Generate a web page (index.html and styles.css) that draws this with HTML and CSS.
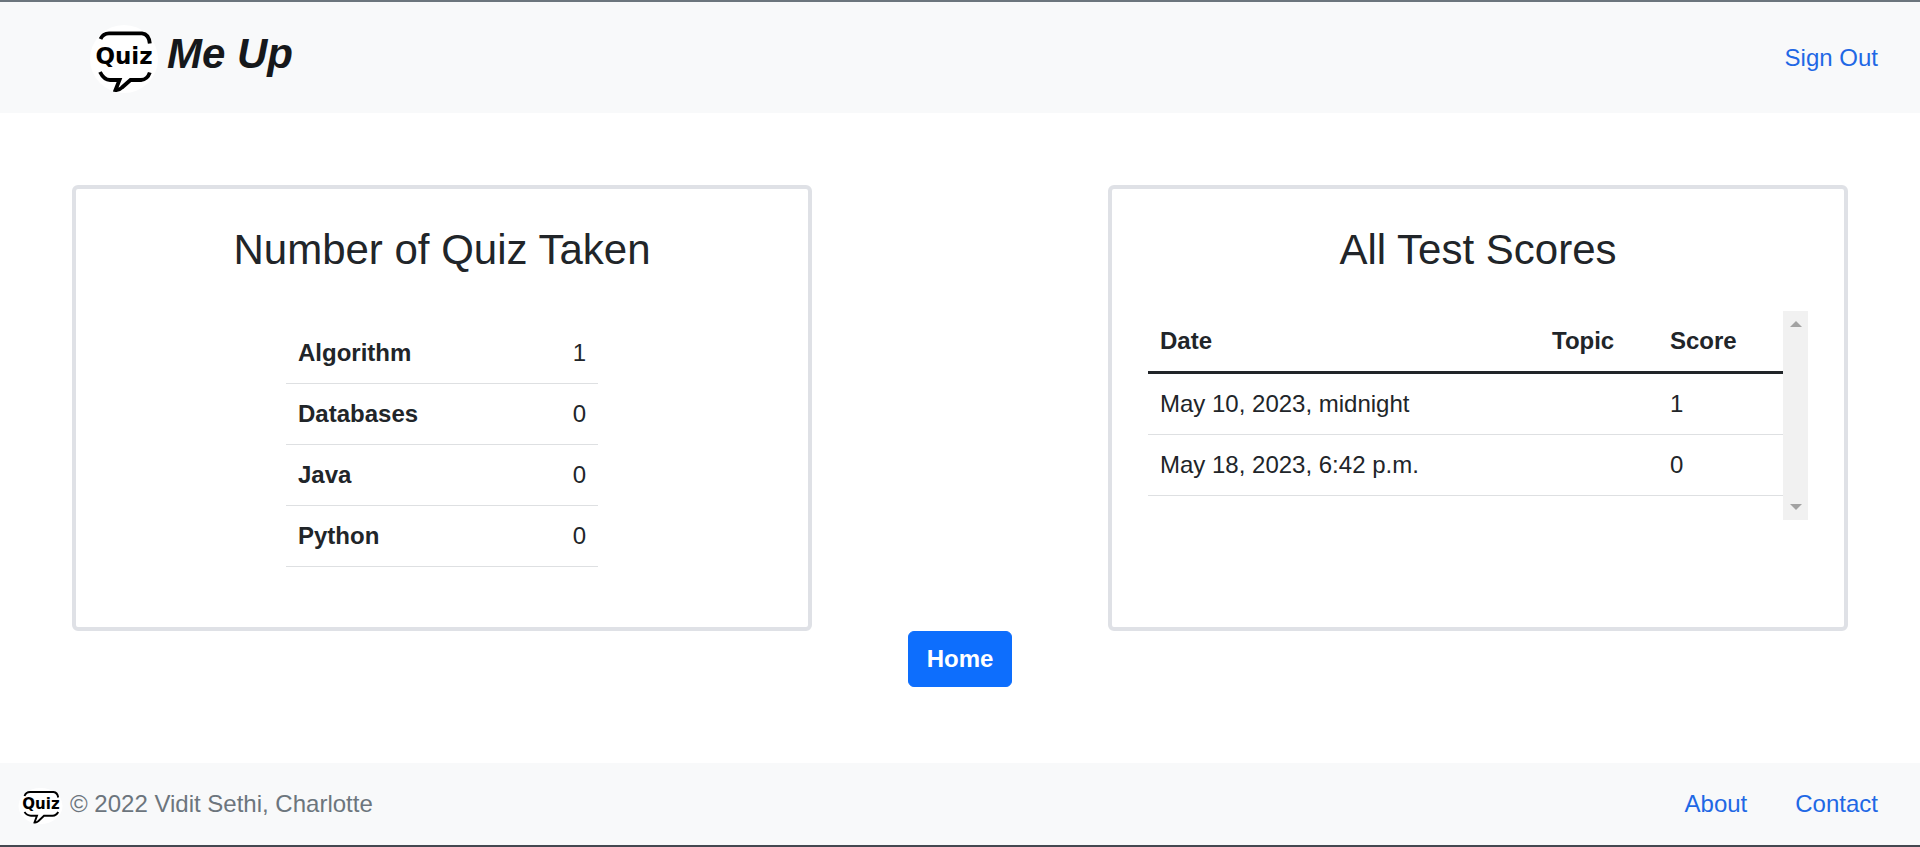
FILE: index.html
```html
<!DOCTYPE html>
<html lang="en">
<head>
<meta charset="utf-8">
<title>Quiz Me Up</title>
<link rel="stylesheet" href="styles.css">
</head>
<body>
<header class="navbar">
  <a class="brand" href="#">
    <svg class="brand-logo" viewBox="0 0 68 68">
      <circle cx="34" cy="34" r="34" fill="#fff"/>
      <g fill="none" stroke="#000" stroke-width="3.8">
        <path d="M10.500 14Q13 8.300 19 8.300H52Q59 9 59.800 18.500"/>
        <path d="M10 47Q14 55 20 55H29.500L25.500 65Q29 65.500 32 62.500L40.500 55H51Q57.500 54.500 59.800 47.500"/>
      </g>
      <text x="34" y="39" text-anchor="middle" class="logo-text">Quiz</text>
    </svg>
    <span>Me Up</span>
  </a>
  <a class="link" href="#">Sign Out</a>
</header>
<main class="content">
  <div class="cards">
    <section class="card">
      <h3 class="card-title">Number of Quiz Taken</h3>
      <table class="table counts">
        <tbody>
          <tr><th scope="row">Algorithm</th><td>1</td></tr>
          <tr><th scope="row">Databases</th><td>0</td></tr>
          <tr><th scope="row">Java</th><td>0</td></tr>
          <tr><th scope="row">Python</th><td>0</td></tr>
        </tbody>
      </table>
    </section>
    <section class="card">
      <h3 class="card-title">All Test Scores</h3>
      <div class="scores-box">
        <table class="table scores">
          <thead>
            <tr><th scope="col">Date</th><th scope="col" class="col-topic">Topic</th><th scope="col" class="col-score">Score</th></tr>
          </thead>
          <tbody>
            <tr><td>May 10, 2023, midnight</td><td></td><td>1</td></tr>
            <tr><td>May 18, 2023, 6:42 p.m.</td><td></td><td>0</td></tr>
          </tbody>
        </table>
        <div class="scrollbar" aria-hidden="true">
          <svg class="arrow" viewBox="0 0 12 6"><path d="M0 6L6 0L12 6Z"/></svg>
          <svg class="arrow" viewBox="0 0 12 6"><path d="M0 0L6 6L12 0Z"/></svg>
        </div>
      </div>
    </section>
  </div>
  <button class="button" type="button">Home</button>
</main>
<footer class="footer">
  <div class="copyright">
    <svg class="footer-logo" viewBox="0 0 46 46">
      <ellipse cx="22.500" cy="25" rx="22" ry="18" fill="#fff"/>
      <g fill="none" stroke="#000" stroke-width="1.9">
        <path d="M6.500 15Q8 11 12 11H35.500Q39.500 11.500 40.200 16.500"/>
        <path d="M6.500 31Q9 34.700 13 34.700H19L16.500 41.500Q18.500 41.800 20.500 40L26 34.700H34.500Q38.500 34.500 40.200 31"/>
      </g>
      <text x="23" y="28" text-anchor="middle" class="logo-text-small">Quiz</text>
    </svg>
    <span>© 2022 Vidit Sethi, Charlotte</span>
  </div>
  <nav class="footer-links">
    <a class="link" href="#">About</a>
    <a class="link" href="#">Contact</a>
  </nav>
</footer>
</body>
</html>
```
FILE: styles.css
```css
* { box-sizing: border-box; }

body {
  margin: 0;
  min-height: 100vh;
  display: flex;
  flex-direction: column;
  border-top: 2px solid #6c757d;
  border-bottom: 2px solid #444850;
  background: #fff;
  color: #212529;
  font-family: "Liberation Sans", Arial, sans-serif;
  font-size: 24px;
  line-height: 36px;
}

.navbar {
  display: flex;
  align-items: center;
  justify-content: space-between;
  padding: 20px 42px 20px 90px;
  background: #f8f9fa;
}
.brand {
  display: flex;
  align-items: flex-start;
  gap: 9px;
  color: #16181b;
  font-size: 42px;
  font-weight: bold;
  font-style: italic;
  line-height: 64px;
  text-decoration: none;
}
.brand-logo { width: 68px; height: 68px; margin-top: 3px; flex: none; }
.logo-text { font: normal bold 23px "DejaVu Sans", sans-serif; }
.logo-text-small { font: normal bold 15px "DejaVu Sans", sans-serif; }
.link { color: #1f68e5; text-decoration: none; }

.content {
  flex: 1;
  display: flex;
  flex-direction: column;
  align-items: center;
  padding: 72px 72px 76px;
}
.cards {
  align-self: stretch;
  display: grid;
  grid-template-columns: 5fr 5fr;
  column-gap: 16.6667%;
}
.card {
  padding: 36px;
  border: 4px solid #dfe1e6;
  border-radius: 6px;
}
.card-title {
  margin: 0 0 36px;
  font-size: 42px;
  font-weight: normal;
  line-height: 50px;
  text-align: center;
}

.table { border-collapse: separate; border-spacing: 0; text-align: left; }
.table th, .table td { padding: 12px; height: 61px; border-bottom: 1px solid #dee0e2; }
.table thead th { height: 63px; border-bottom: 3px solid #212529; }

.counts { width: 312px; margin: 48px auto 24px; }
.counts td { text-align: right; }

.scores-box { display: flex; height: 209px; }
.scores { flex: 1; align-self: flex-start; table-layout: fixed; width: 100%; }
.col-topic { width: 118px; }
.col-score { width: 125px; }
.scrollbar {
  flex: none;
  width: 25px;
  padding: 10px 0;
  display: flex;
  flex-direction: column;
  align-items: center;
  justify-content: space-between;
  background: #f1f1f1;
}
.arrow { width: 12px; height: 6px; fill: #a3a3a3; }

.button {
  padding: 9px 18px;
  border: 1px solid #0d6efd;
  border-radius: 6px;
  background: #0d6efd;
  color: #fff;
  font: inherit;
  font-weight: bold;
}

.footer {
  display: flex;
  align-items: center;
  justify-content: space-between;
  padding: 18px 42px 18px 18px;
  background: #f8f9fa;
}
.copyright { display: flex; align-items: center; gap: 6px; color: #6c757d; }
.footer-logo { width: 46px; height: 46px; }
.footer-links { display: flex; gap: 48px; }
```
